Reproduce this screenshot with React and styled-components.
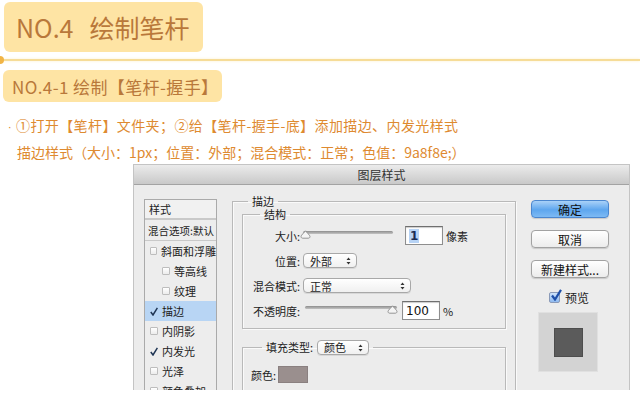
import React from 'react'
import styled, { createGlobalStyle } from 'styled-components'

const GlobalStyle = createGlobalStyle`
  body {
    margin: 0;
    background: #fff;
    font-family: "Noto Sans CJK SC", "Noto Sans", sans-serif;
  }
`

const Page = styled.div`
  width: 640px;
  height: 393px;
  overflow: hidden;
`

const TitleBadge = styled.div`
  margin: 2px 0 0 4px;
  width: 199px;
  height: 50px;
  box-sizing: border-box;
  padding-left: 12px;
  display: flex;
  align-items: center;
  gap: 16px;
  background: #fee4a4;
  border-radius: 6px;
  color: #b9783a;
  font-size: 25px;
  line-height: 1;
`

const Divider = styled.div`
  position: relative;
  margin-top: 7px;
  height: 2px;
  background: #f6dc97;
  box-shadow: 0 0 3px #fbefc8;

  &::before {
    content: '';
    position: absolute;
    left: -4px;
    top: -3px;
    width: 8px;
    height: 8px;
    border-radius: 50%;
    background: #f1b445;
  }
`

const SubBadge = styled.div`
  margin: 9px 0 0 3px;
  width: 219px;
  height: 32px;
  box-sizing: border-box;
  padding-left: 9px;
  display: flex;
  align-items: center;
  background: #fee4a4;
  border-radius: 6px;
  color: #b9783a;
  font-size: 17px;
  letter-spacing: 0.4px;
  white-space: nowrap;
`

const Steps = styled.div`
  margin-top: 11px;
  padding-left: 8px;
  font-size: 14px;
  line-height: 24px;
  color: #de8a30;
  white-space: nowrap;
`

const Line = styled.div`
  padding-left: ${p => p.$indent || 0}px;
  letter-spacing: ${p => p.$spacing || 0}px;
`

const Bullet = styled.span`
  display: inline-block;
  width: 8px;
  font-family: "DejaVu Sans", sans-serif;
  font-size: 11px;
`

/* ---------- dialog ---------- */

const Dialog = styled.div`
  margin: 0 0 0 133px;
  width: 497px;
  height: 226px;
  box-sizing: border-box;
  background: #ececec;
  border: 1px solid #c4c4c4;
  border-bottom: none;
  overflow: hidden;
  font-size: 11px;
  color: #222;
`

const TitleBar = styled.div`
  height: 19px;
  border-bottom: 1px solid #a3a3a3;
  background: linear-gradient(#ebebeb, #c9c9c9);
  display: flex;
  align-items: center;
  justify-content: center;
  font-size: 12px;
  color: #333;
`

const Body = styled.div`
  display: grid;
  grid-template-columns: 73px 284px 78px;
  column-gap: 15px;
  padding: 14px 0 0 10px;
  align-items: start;
`

const StyleList = styled.div`
  height: 200px;
  border: 1px solid #aaa;
  border-bottom: none;
  background: #ededed;
`

const ListHead = styled.div`
  height: 18px;
  padding-left: 4px;
  display: flex;
  align-items: center;
  border-bottom: 2px solid #c9c9c9;
  background: #f1f1f1;
`

const ListItem = styled.div`
  height: 20px;
  padding-left: ${p => (p.$sub ? 17 : p.$plain ? 3 : 5)}px;
  display: flex;
  align-items: center;
  gap: 4px;
  font-size: ${p => (p.$plain ? 10.5 : 11)}px;
  background: ${p => (p.$active ? '#b8d5f4' : 'transparent')};
  border-top: ${p => (p.$line ? '1px solid #c9c9c9' : 'none')};
  white-space: nowrap;
`

const Box = styled.span`
  width: 6px;
  height: 6px;
  border: 1px solid #bdbdbd;
  border-radius: 1px;
  background: linear-gradient(#fff, #ececec);
`

const Tick = () => (
  <svg width="8" height="9" viewBox="0 0 8 9">
    <path d="M0.8 5 L3 8 L7.4 0.8" fill="none" stroke="#1f3554" strokeWidth="1.5" />
  </svg>
)

const Group = styled.fieldset`
  margin: ${p => p.$top || 0}px 0 0;
  padding: 0 ${p => p.$pad || 7}px ${p => p.$bottom || 0}px;
  border: 1px solid #b9b9b9;
  box-shadow: inset 1px 1px 0 #fafafa, 1px 1px 0 #fafafa;
  min-width: 0;
  height: ${p => (p.$height ? p.$height + 'px' : 'auto')};
  box-sizing: border-box;
`

const Caption = styled.legend`
  margin-left: ${p => p.$shift || 10}px;
  padding: 0 4px;
  line-height: 13px;
  font-size: 11px;
  display: flex;
  align-items: center;
  gap: 4px;
`

const Rows = styled.div`
  display: grid;
  grid-template-columns: 50px 1fr;
  grid-auto-rows: 25px;
  column-gap: 3px;
  align-items: center;
  padding-top: 2px;
`

const Label = styled.span`
  text-align: right;
  white-space: nowrap;
`

const Control = styled.div`
  display: flex;
  align-items: center;
`

const Slider = styled.div`
  position: relative;
  width: ${p => p.$w}px;
  height: 3px;
  margin-top: -6px;
  background: linear-gradient(#8d8d8d, #c4c4c4);
  border-radius: 2px;
`

const Thumb = styled.svg`
  position: absolute;
  top: -1px;
  left: ${p => p.$left}px;
`

const Field = styled.div`
  margin-left: ${p => p.$gap}px;
  width: 38px;
  height: 19px;
  box-sizing: border-box;
  border: 1px solid #8e8e8e;
  border-top-color: #6f6f6f;
  background: #fff;
  box-shadow: inset 0 1px 1px #ccc;
  display: flex;
  align-items: center;
  padding-left: 3px;
  font-size: 12px;
  font-family: "DejaVu Sans", sans-serif;
  color: #111;
`

const Selected = styled.span`
  background: #b7d3f5;
  padding: 0 1px;
  line-height: 14px;
  font-weight: bold;
  color: #1a2c55;
`

const Unit = styled.span`
  margin-left: 3px;
  font-size: 11px;
`

const Select = styled.div`
  width: ${p => p.$w}px;
  height: 15px;
  box-sizing: border-box;
  border: 1px solid #a8a8a8;
  border-radius: 4px;
  background: linear-gradient(#fff, #f0f0f0);
  box-shadow: 0 1px 0 #d8d8d8;
  display: flex;
  align-items: center;
  justify-content: space-between;
  padding: 0 5px 0 6px;
  font-size: 11px;
`

const Arrows = () => (
  <svg width="5" height="8" viewBox="0 0 5 8">
    <path d="M0.5 3 L2.5 0.6 L4.5 3 Z M0.5 5 L2.5 7.4 L4.5 5 Z" fill="#333" />
  </svg>
)

const ColorRow = styled.div`
  display: flex;
  align-items: center;
  gap: 2px;
  padding: 11px 0 0 1px;
`

const Swatch = styled.div`
  width: 30px;
  height: 17px;
  background: #9a8f8e;
  border: 1px solid #8a8080;
  box-sizing: border-box;
`

const Side = styled.div`
  display: flex;
  flex-direction: column;
  align-items: center;
  padding-top: 1px;
`

const Button = styled.div`
  width: 78px;
  height: 18px;
  box-sizing: border-box;
  margin-bottom: 12px;
  border: 1px solid ${p => (p.$primary ? '#4a86cf' : '#a2a2a2')};
  border-radius: 4px;
  background: ${p =>
    p.$primary
      ? 'linear-gradient(#a9d1f8, #5ea6ee 55%, #7dbaf4)'
      : 'linear-gradient(#ffffff, #ececec)'};
  box-shadow: 0 1px 1px #c9c9c9;
  display: flex;
  align-items: center;
  justify-content: center;
  font-size: 12px;
  color: #111;
  white-space: nowrap;
`

const Preview = styled.label`
  margin-top: -1px;
  display: flex;
  align-items: center;
  gap: 5px;
  font-size: 12px;
  margin-left: -2px;
`

const PreviewBox = styled.span`
  position: relative;
  width: 9px;
  height: 9px;
  border: 1px solid #8a9ab8;
  border-radius: 2px;
  background: linear-gradient(#cfe3fb, #8fbaf0);

  svg {
    position: absolute;
    left: 1px;
    top: -4px;
  }
`

const Thumbnail = styled.div`
  margin: 6px 0 0 -4px;
  width: 60px;
  height: 60px;
  box-sizing: border-box;
  border: 1px solid #e0e0e0;
  background: #d3d3d3;
  display: flex;
  align-items: center;
  justify-content: center;
`

const Square = styled.div`
  width: 29px;
  height: 29px;
  background: #5b5b5b;
  border: 1px solid #4d4d4d;
  box-sizing: border-box;
`

const ThumbShape = ({ left }) => (
  <Thumb $left={left} width="11" height="9" viewBox="0 0 11 9">
    <path
      d="M5.5 0.8 C6.5 2.5 10 5 10 6.6 C10 7.8 9 8.2 8 8.2 L3 8.2 C2 8.2 1 7.8 1 6.6 C1 5 4.5 2.5 5.5 0.8 Z"
      fill="#f4f4f4"
      stroke="#8a8a8a"
      strokeWidth="0.9"
    />
  </Thumb>
)

const listItems = [
  { text: '斜面和浮雕', line: true },
  { text: '等高线', sub: true },
  { text: '纹理', sub: true },
  { text: '描边', checked: true, active: true },
  { text: '内阴影' },
  { text: '内发光', checked: true },
  { text: '光泽' },
  { text: '颜色叠加' },
]

const LayerStyleDialog = () => (
  <Dialog>
    <TitleBar>图层样式</TitleBar>
    <Body>
      <StyleList>
        <ListHead>样式</ListHead>
        <ListItem $plain>混合选项:默认</ListItem>
        {listItems.map(item => (
          <ListItem key={item.text} $sub={item.sub} $active={item.active} $line={item.line}>
            {item.checked ? <Tick /> : <Box />}
            {item.text}
          </ListItem>
        ))}
      </StyleList>

      <Group $pad={9} $height={210} style={{ marginTop: -4 }}>
        <Caption $shift={6}>描边</Caption>
        <Group $bottom={5}>
          <Caption $shift={10}>结构</Caption>
          <Rows>
            <Label>大小:</Label>
            <Control>
              <Slider $w={90}>
                <ThumbShape left={-3} />
              </Slider>
              <Field $gap={12}>
                <Selected>1</Selected>
              </Field>
              <Unit>像素</Unit>
            </Control>
            <Label>位置:</Label>
            <Control>
              <Select $w={54}>
                外部 <Arrows />
              </Select>
            </Control>
            <Label>混合模式:</Label>
            <Control>
              <Select $w={108}>
                正常 <Arrows />
              </Select>
            </Control>
            <Label>不透明度:</Label>
            <Control>
              <Slider $w={92} style={{ marginLeft: 2 }}>
                <ThumbShape left={82} />
              </Slider>
              <Field $gap={5}>100</Field>
              <Unit>%</Unit>
            </Control>
          </Rows>
        </Group>
        <Group $top={11} $height={60}>
          <Caption $shift={12}>
            填充类型:
            <Select $w={52}>
              颜色 <Arrows />
            </Select>
          </Caption>
          <ColorRow>
            颜色:
            <Swatch />
          </ColorRow>
        </Group>
      </Group>

      <Side>
        <Button $primary>确定</Button>
        <Button>取消</Button>
        <Button>新建样式...</Button>
        <Preview>
          <PreviewBox>
            <svg width="11" height="12" viewBox="0 0 11 12">
              <path d="M1 6.5 L4 10.5 L10 0.8" fill="none" stroke="#1e4fa8" strokeWidth="2.2" />
            </svg>
          </PreviewBox>
          预览
        </Preview>
        <Thumbnail>
          <Square />
        </Thumbnail>
      </Side>
    </Body>
  </Dialog>
)

const App = () => (
  <Page>
    <GlobalStyle />
    <TitleBadge>
      <span>NO.4</span>
      <span>绘制笔杆</span>
    </TitleBadge>
    <Divider />
    <SubBadge>NO.4-1 绘制【笔杆-握手】</SubBadge>
    <Steps>
      <Line $spacing={0.4}>
        <Bullet>·</Bullet>①打开【笔杆】文件夹；②给【笔杆-握手-底】添加描边、内发光样式
      </Line>
      <Line $indent={9}>描边样式（大小：1px；位置：外部；混合模式：正常；色值：9a8f8e;）</Line>
    </Steps>
    <LayerStyleDialog />
  </Page>
)

export default App
